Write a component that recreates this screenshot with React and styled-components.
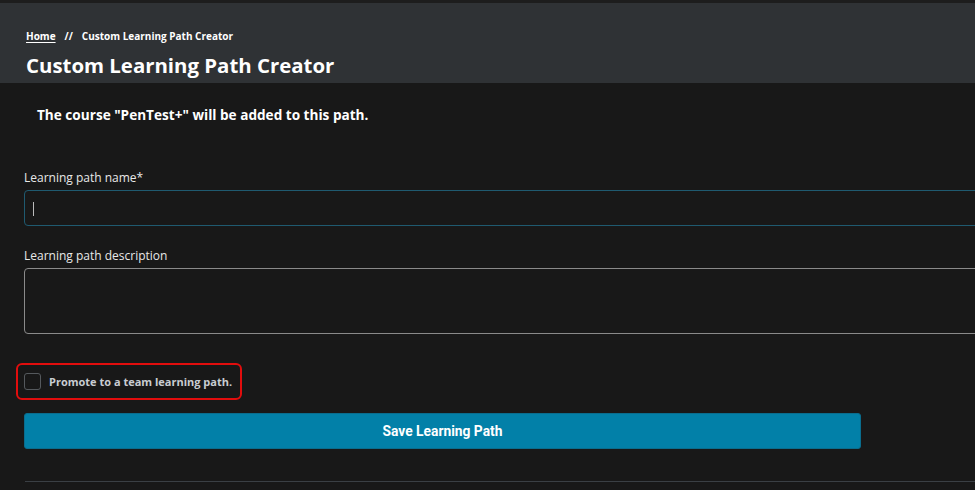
import React from 'react'
import styled, { createGlobalStyle } from 'styled-components'

const Global = createGlobalStyle`
  html, body {
    margin: 0;
    padding: 0;
    background: #181818;
    overflow: hidden;
  }
  body {
    font-family: 'Open Sans', 'Noto Sans', sans-serif;
    color: #fff;
  }
`

const Page = styled.div`
  width: 975px;
  height: 490px;
  overflow: hidden;
  border-top: 3px solid #1d1d1d;
  box-sizing: border-box;
`

const Header = styled.header`
  background: #2f3235;
  height: 80px;
  padding: 26px 0 0 26px;
  box-sizing: border-box;
`

const Crumbs = styled.nav`
  display: flex;
  align-items: center;
  gap: 9px;
  font-size: 10px;
  font-weight: 700;
  line-height: 14px;
`

const CrumbLink = styled.a`
  color: #fff;
  text-decoration: underline;
  text-underline-offset: 2px;
`

const Title = styled.h1`
  margin: 8px 0 0;
  font-size: 20.4px;
  line-height: 28px;
  font-weight: 700;
`

const Body = styled.main`
  padding: 0 0 0 24px;
`

const Notice = styled.p`
  margin: 0;
  padding: 22px 0 0 13px;
  font-size: 13.6px;
  font-weight: 700;
  line-height: 20px;
`

const Form = styled.form`
  width: 1000px;
  margin-top: 44px;
  display: flex;
  flex-direction: column;
`

const Label = styled.label`
  font-size: 12px;
  line-height: 18px;
  color: #e8e8e8;
  margin-bottom: 3px;
`

const Field = styled.div`
  position: relative;
  height: ${p => p.h}px;
  border: 1px solid ${p => p.line};
  border-radius: 4px;
  box-sizing: border-box;
  margin-bottom: ${p => p.gap}px;
`

const Caret = styled.span`
  position: absolute;
  left: 8px;
  top: 11px;
  width: 1px;
  height: 14px;
  background: #bbb;
`

const Promo = styled.div`
  margin: 29px 0 0 -8px;
  width: 226px;
  height: 37px;
  border: 2px solid #e10d0d;
  border-radius: 6px;
  box-sizing: border-box;
  display: flex;
  align-items: center;
  gap: 8px;
  padding-left: 6px;
`

const Box = styled.span`
  width: 17px;
  height: 17px;
  border: 1px solid #55595d;
  border-radius: 3px;
  box-sizing: border-box;
`

const PromoText = styled.span`
  font-size: 11px;
  font-weight: 700;
  color: #c9cdd2;
`

const Save = styled.button`
  margin-top: 13px;
  width: 837px;
  height: 36px;
  border: 1px solid #0a6d8e;
  border-radius: 3px;
  background: #0280a8;
  color: #fff;
  font-family: Roboto, 'Open Sans', sans-serif;
  font-size: 13.8px;
  font-weight: 700;
`

const Rule = styled.hr`
  margin: 32px 0 0 1px;
  border: 0;
  border-top: 1px solid #3a3f44;
  width: 1000px;
`

export default function App() {
  return (
    <Page>
      <Global />
      <Header>
        <Crumbs>
          <CrumbLink>Home</CrumbLink>
          <span>//</span>
          <span>Custom Learning Path Creator</span>
        </Crumbs>
        <Title>Custom Learning Path Creator</Title>
      </Header>
      <Body>
        <Notice>The course "PenTest+" will be added to this path.</Notice>
        <Form>
          <Label>Learning path name*</Label>
          <Field h={36} line="#1f5a70" gap={21}>
            <Caret />
          </Field>
          <Label>Learning path description</Label>
          <Field h={66} line="#8a8a8a" gap={0} />
        </Form>
        <Promo>
          <Box />
          <PromoText>Promote to a team learning path.</PromoText>
        </Promo>
        <Save type="button">Save Learning Path</Save>
        <Rule />
      </Body>
    </Page>
  )
}
